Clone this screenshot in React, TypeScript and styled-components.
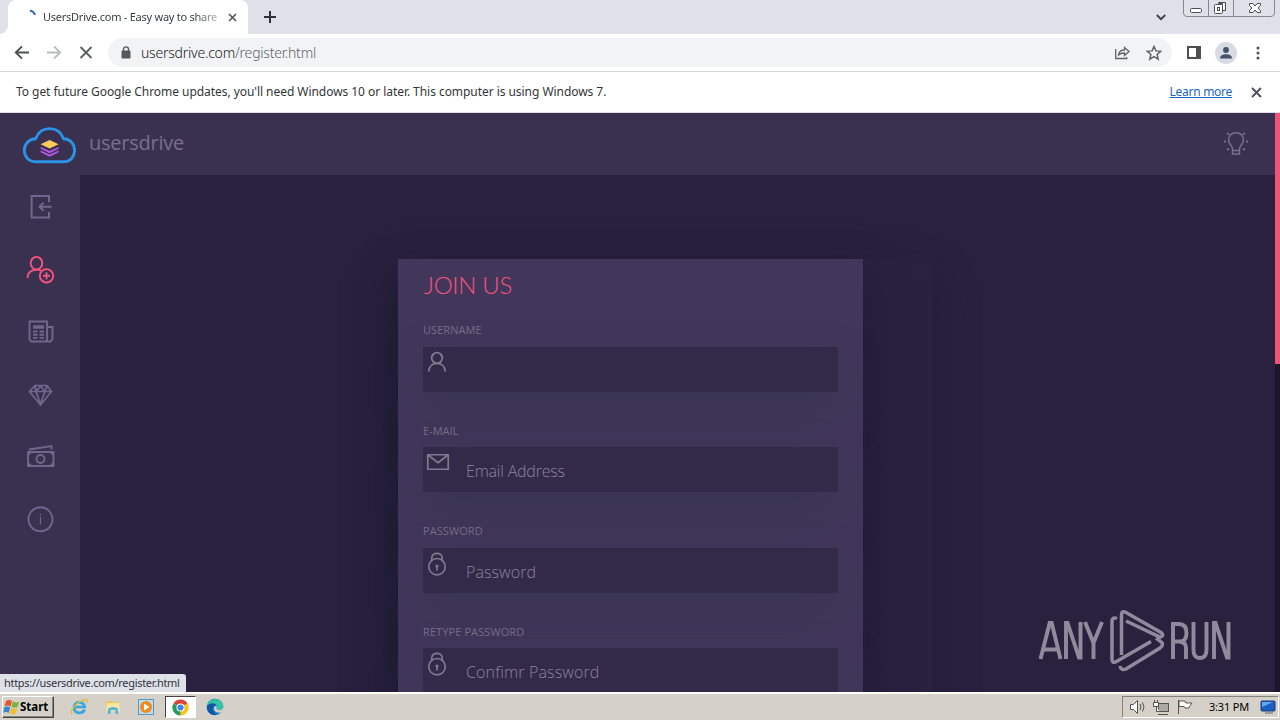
import React from 'react';
import styled, { createGlobalStyle } from 'styled-components';

const ui = `'Noto Sans', 'Open Sans', sans-serif`;
const light = `'Open Sans', 'Noto Sans', sans-serif`;

interface IField {
    label: string;
    placeholder: string;
    icon: React.ReactNode;
    labelSpacing: number;
    textSpacing: number;
}

const UserIcon = () => (
    <svg width="22" height="22" viewBox="0 0 22 22" fill="none" stroke="currentColor" strokeWidth="1.8">
        <circle cx="11" cy="7" r="5.3" />
        <path d="M2.7 20.5c.3-5 3.7-8.2 8.3-8.2s8 3.2 8.3 8.2" />
    </svg>
);

const MailIcon = () => (
    <svg width="24" height="22" viewBox="0 0 24 22" fill="none" stroke="currentColor" strokeWidth="1.7">
        <path d="M1.75 3.75h20.5v14.5H1.75zM2 4l10 7.7L22 4" />
    </svg>
);

const LockIcon = () => (
    <svg width="22" height="26" viewBox="0 1 22 26" fill="none" stroke="currentColor" strokeWidth="1.7">
        <path d="M5.8 9.5V6.8c0-6 10.4-6 10.4 0v2.7" />
        <circle cx="11" cy="15.7" r="8.2" />
        <circle cx="11" cy="15" r="1.6" fill="currentColor" stroke="none" />
        <path d="M11 15v4.5" />
    </svg>
);

const FIELDS: IField[] = [
    { label: 'USERNAME', placeholder: '', icon: <UserIcon />, labelSpacing: 0.05, textSpacing: 0 },
    { label: 'E-MAIL', placeholder: 'Email Address', icon: <MailIcon />, labelSpacing: 0, textSpacing: -0.2 },
    { label: 'PASSWORD', placeholder: 'Password', icon: <LockIcon />, labelSpacing: 0.08, textSpacing: 0.08 },
    { label: 'RETYPE PASSWORD', placeholder: 'Confimr Password', icon: <LockIcon />, labelSpacing: 0.1, textSpacing: 0.15 },
];

const CloudLogo = () => (
    <svg width="54" height="38" viewBox="-0.6 -0.6 54 38" fill="none">
        <path
            d="M14 35.2C6 35.2 1.7 30 1.7 23.700c0-6.500 4.800-11.300 11.300-11.600C15.500 5.500 21 2 27 2s11.500 3.500 14 10.100c6.500.3 11 5.100 11 11.600 0 6.300-4 11.500-12 11.500z"
            stroke="#2c92e6"
            strokeWidth="2.9"
        />
        <path d="M27 13.5l9 4.200-9 4.200-9-4.200z" fill="#ffc95c" />
        <path d="M18 20.500l9 4 9-4v1.700l-9 4.500-9-4.500zM18 24l9 4 9-4v1.700l-9 4.500-9-4.500z" fill="#b956e8" />
    </svg>
);

const BulbIcon = () => (
    <svg width="26" height="26" viewBox="0 0 26 26" fill="none" stroke="currentColor" strokeWidth="1.5">
        <path d="M9.500 20v-2.500c0-2.500-4-4-4-8.800C5.500 4.500 8.800 1.800 13 1.800s7.500 2.700 7.500 6.900c0 4.800-4 6.300-4 8.800V23h-7zM9.500 19.500h7" />
        <path d="M4 2l2 1.500M22 2l-2 1.500M1 10.500h2M23 10.500h2M4 19l2-1.500M22 19l-2-1.500" strokeWidth="1.8" />
    </svg>
);

const NAV: { name: string; active?: boolean; drawing: React.ReactNode }[] = [
    {
        name: 'login',
        drawing: <path d="M24 11V5H6.600v21.500H24V21M26.500 15.700H14.500m4-4l-4 4 4 4" strokeWidth="2" />,
    },
    {
        name: 'register',
        active: true,
        drawing: (
            <>
                <ellipse cx="11.500" cy="9.200" rx="5.800" ry="6.300" />
                <path d="M2.500 24c0-4.500 3-8 9-8.400 2 0 3 .3 4.500 1" />
                <circle cx="21.500" cy="21.800" r="6.700" />
                <path d="M21.500 18.300v7M18 21.800h7" />
            </>
        ),
    },
    {
        name: 'news',
        drawing: (
            <>
                <path d="M22 25.500H6.500l-2-2V5.500H22zM22 11h5.500v12l-2 2.500H22" />
                <path d="M8 11h11" strokeWidth="3.500" />
                <path d="M8 15.500h4.500M14.500 15.500H19M8 18.700h4.500M14.500 18.700H19M8 21.900h4.500M14.500 21.900H19" />
            </>
        ),
    },
    {
        name: 'premium',
        drawing: <path d="M10 6.500h12l4.500 6L15.500 26l-11-13.500zM4.500 12.500h22M10 6.500l1 6L15.500 25 20 12.500l2-6M11 12.500L15.500 7l4.500 5.500" strokeWidth="1.7" />,
    },
    {
        name: 'money',
        drawing: (
            <>
                <path d="M3 11h25.500v14H3zM4 8.500L26.500 5v3.500" />
                <circle cx="15.500" cy="18" r="4" />
                <path d="M3 14l3-3M3 22l3 3M28.500 14l-3-3M28.500 22l-3 3" />
            </>
        ),
    },
    {
        name: 'info',
        drawing: (
            <>
                <circle cx="15.500" cy="15.300" r="12" />
                <path d="M15.500 13v7.500M15.500 10v1.500" strokeWidth="1.200" />
            </>
        ),
    },
];

const CloseIcon = ({ size, width = 1.6 }: { size: number; width?: number }) => (
    <svg width={size} height={size} viewBox={`0 0 ${size} ${size}`} stroke="#505357" strokeWidth={width}>
        <path d={`M1 1L${size - 1} ${size - 1}M${size - 1} 1L1 ${size - 1}`} />
    </svg>
);

const TabStrip = () => (
    <StyledTabStrip>
        <StyledCorner />
        <StyledTab>
            <StyledSpinner>
                <svg width="16" height="16" viewBox="0 0 16 16" fill="none">
                    <path d="M6 2.500a7 7 0 0 1 5 4.500" stroke="#3b63c4" strokeWidth="1.8" />
                </svg>
            </StyledSpinner>
            <StyledTabTitle>UsersDrive.com - Easy way to share</StyledTabTitle>
            <CloseIcon size={9} />
        </StyledTab>
        <StyledNewTab>
            <svg width="12" height="12" viewBox="0 0 12 12" stroke="#303236" strokeWidth="2">
                <path d="M6 0v12M0 6h12" />
            </svg>
        </StyledNewTab>
        <StyledTabSearch>
            <svg width="10" height="7" viewBox="0 0 10 7" fill="none" stroke="#3c4043" strokeWidth="1.8">
                <path d="M.8 1L5 5.200 9.200 1" />
            </svg>
        </StyledTabSearch>
        <StyledCaption>
            <svg width="94" height="18" viewBox="0 0 94 18" fill="none" stroke="#85888e">
                <path d="M1.500 0v13q0 3.500 3.500 3.500h84q3.500 0 3.500-3.500V0M26.500 0v16M51.500 0v16" />
                <g stroke="#4b4e56">
                    <rect x="8.500" y="8.500" width="11" height="4" rx="1" fill="#fff" />
                    <path d="M36.500 3.500v-1h7v8h-3v-7z" fill="#fff" />
                    <rect x="32.500" y="4.500" width="8" height="9" rx="1" fill="#fff" />
                    <rect x="35.500" y="7.500" width="2" height="3" />
                    <path d="M67.500 3.500h3.500l2 2.500 2-2.500h3.500v2l-2.500 2.500 2.500 2.500v2H75l-2-2.500-2 2.500h-3.500v-2L70 8l-2.500-2.500z" fill="#fff" />
                </g>
            </svg>
        </StyledCaption>
    </StyledTabStrip>
);

const Toolbar = () => (
    <StyledToolbar>
        <svg width="94" height="16" viewBox="0 0 94 16" fill="none" strokeWidth="1.9">
            <path d="M15 7.500H2m6-6.200L1.800 7.500 8 13.700" stroke="#4d5053" />
            <path d="M33 7.500h13m-6-6.200l6.200 6.200-6.200 6.200" stroke="#babcbe" />
            <path d="M66.500 2l11 11M77.500 2l-11 11" stroke="#5d6063" />
        </svg>
        <StyledAddress>
            <svg width="10" height="13" viewBox="0 0 10 13" fill="none">
                <rect x="0.500" y="4.500" width="9" height="8" rx="1" fill="#54575b" />
                <path d="M2.500 5V3.300c0-3.300 5-3.300 5 0V5" stroke="#54575b" strokeWidth="1.4" />
            </svg>
            <StyledUrl>
                usersdrive.com<span>/register.html</span>
            </StyledUrl>
            <svg width="48" height="16" viewBox="0 0 48 16" fill="none" stroke="#5f6368" strokeWidth="1.3">
                <path d="M1.700 4v9.500h11V12M4.500 10c.5-3.500 2.500-5 6-5V2.500L15 6.500l-4.500 4V8c-3 0-4.500.5-6 2z" />
                <path d="M40 1.500l1.900 4.400 4.800.4-3.600 3.200 1.100 4.700-4.200-2.500-4.200 2.500 1.100-4.700-3.600-3.200 4.800-.4z" strokeWidth="1.5" />
            </svg>
        </StyledAddress>
        <StyledPanelIcon />
        <StyledAvatar>
            <svg width="12" height="12" viewBox="0 0 12 12" fill="#45506b">
                <circle cx="6" cy="3" r="2.9" />
                <path d="M0 11.500C0 8.500 3 7.300 6 7.300s6 1.200 6 4.200z" />
            </svg>
        </StyledAvatar>
        <svg width="4" height="14" viewBox="0 0 4 14" fill="#4d5053">
            <circle cx="2" cy="2" r="1.5" />
            <circle cx="2" cy="7" r="1.5" />
            <circle cx="2" cy="12" r="1.5" />
        </svg>
    </StyledToolbar>
);

const Watermark = () => (
    <StyledWatermark>
        <svg width="196" height="64" viewBox="0 0 196 64" fill="none" stroke="#aaa5b5" strokeWidth="3.9">
            <g opacity=".8">
                <path d="M2.500 50L11.700 14h2L22.500 50M5.500 40.500h14" />
                <path d="M28 50V14h1.500L41 48.500h1.500V13" />
                <path d="M47 13l8.500 21V50M64 13l-8.500 21" />
                <path d="M79 9.500q-5-2-5 3V50q0 5 4.500 2.500L113 32.500" strokeWidth="3.5" />
                <path d="M83.500 46V6q0-5 4.500-2.500L123 23.500q4 3-1 4.700L88 12" strokeWidth="3.5" />
                <path d="M82 57q1 5 6 3l34-21q5-4 0-7l-4-3" strokeWidth="3.5" />
                <path d="M135 50V15h6q7.500 0 7.500 9t-7.500 8.500h-6M142 33q6 0 6 6v11" />
                <path d="M155.500 13v28q0 8 6.500 8t6.500-8V13" />
                <path d="M176 50V14h1.500L189 48.500h1.500V13" />
            </g>
        </svg>
    </StyledWatermark>
);

const Taskbar = () => (
    <StyledTaskbar>
        <StyledStart>
            <svg width="17" height="16" viewBox="0 0 17 16">
                <path d="M3 2q3-2 6 0L7.500 7.500q-3-2-6 0z" fill="#e4572e" />
                <path d="M9.800 2.300q3 2 6.200.4L14.500 8q-3 1.500-6-.2z" fill="#79b53b" />
                <path d="M1.200 8.600q3-2 6 0L5.700 14q-3-2-5.500 0z" fill="#3a82d2" />
                <path d="M8.200 9q3 2 6 .2l-1.500 5.300q-3 1.500-6-.2z" fill="#f5bd2b" />
            </svg>
            Start
        </StyledStart>
        <StyledApp>
            <svg width="18" height="18" viewBox="0 0 18 18" fill="none">
                <path d="M14.500 11.500c-1.500 5-10.500 4.500-10.500-2s9.500-7 10.700-.5H5" stroke="#36a7e3" strokeWidth="2.7" />
                <path d="M2 16C-1 12 9 2 16.500 1.500c1.500.5 0 3-.5 3.500" stroke="#e6bb3c" strokeWidth="1.3" />
            </svg>
        </StyledApp>
        <StyledApp>
            <svg width="18" height="18" viewBox="0 0 18 18">
                <path d="M2 3.500l5-1 1 1.500h7v9H2z" fill="#e9c65e" />
                <path d="M3 5h12l1 8H2z" fill="#f8e6a0" />
                <path d="M4 16v-5.500q5-3 10 0V16h-2.500v-4h-5v4z" fill="#55b2d9" />
            </svg>
        </StyledApp>
        <StyledApp>
            <svg width="18" height="18" viewBox="0 0 18 18">
                <rect x="1.500" y="1.500" width="15" height="15" fill="#bcdcf0" stroke="#5598c6" />
                <circle cx="9" cy="9" r="6" fill="#f28a1a" />
                <path d="M7 5.500L12.500 9 7 12.500z" fill="#fff" />
            </svg>
        </StyledApp>
        <StyledApp $active>
            <svg width="17" height="17" viewBox="0 0 18 18">
                <path d="M9 9L1.600 4.750A8.500 8.500 0 0 1 16.400 4.750z" fill="#dc4437" />
                <path d="M9 9L16.400 4.750A8.500 8.500 0 0 1 9 17.500z" fill="#fbc116" />
                <path d="M9 9v8.500A8.500 8.500 0 0 1 1.600 4.750z" fill="#279c54" />
                <circle cx="9" cy="9" r="4.3" fill="#fff" />
                <circle cx="9" cy="9" r="3.3" fill="#4285e8" />
            </svg>
        </StyledApp>
        <StyledApp>
            <svg width="18" height="18" viewBox="0 0 18 18">
                <circle cx="9" cy="9" r="8.3" fill="#1677c5" />
                <path d="M1 8C2-1 17-1 17.300 8.500c0 4-5.300 4-6.800 2.500 1.500-3-3-6-9.500-3z" fill="#35c1a8" />
                <path d="M17.300 8.500c0 4-5.300 4-6.800 2.500.5-1.500 0-2.500-1-3.200-4 3 0 8.200 5.500 6.700l2-2z" fill="#d3d0c8" />
                <path d="M1 8c3.500-4 9-3 9.500 0-4-2-6 5 0 8.700C4 18 0 13 1 8z" fill="#1257a4" />
            </svg>
        </StyledApp>
        <StyledTray>
            <svg width="68" height="18" viewBox="0 0 68 18" fill="#fff" stroke="#55544f">
                <path d="M1.500 6.500h3l4-4v13l-4-4h-3z" />
                <path d="M11 6q2 3 0 6M13.500 4.500q3 4.500 0 9" fill="none" />
                <rect x="29.500" y="5.500" width="10" height="8" fill="#aaa9a4" />
                <path d="M29 16.500h10M25.500 2v3M28.500 2v3M24.500 4.500h5v4h-5zM27.500 8.500v5h3" />
                <path d="M49.500 2v14M50 3h6l1 2h6l-2.500 3.500L60 10h-4l-1-1.500h-5z" />
            </svg>
            <StyledClock>3:31 PM</StyledClock>
            <svg width="17" height="14" viewBox="0 0 17 14">
                <rect x="1" y="1" width="14" height="10" rx="1" fill="#1d5dc0" stroke="#173d7c" />
                <path d="M2 2h11L2 7z" fill="#64a8ee" />
                <path d="M5 13h8" stroke="#5c6775" />
            </svg>
        </StyledTray>
    </StyledTaskbar>
);

const App = () => {
    return (
        <StyledScreen>
            <GlobalStyle />
            <TabStrip />
            <Toolbar />
            <StyledInfoBar>
                <p>To get future Google Chrome updates, you'll need Windows 10 or later. This computer is using Windows 7.</p>
                <a>Learn more</a>
                <CloseIcon size={11} width={1.9} />
            </StyledInfoBar>
            <StyledPage>
                <StyledSite>
                    <StyledHeader>
                        <CloudLogo />
                        <StyledBrand>usersdrive</StyledBrand>
                        <BulbIcon />
                    </StyledHeader>
                    <StyledBody>
                        <StyledSidebar>
                            {NAV.map((item) => (
                                <StyledNavItem key={item.name} $active={item.active}>
                                    <svg width="32" height="32" viewBox="0 0 32 32" fill="none" stroke="currentColor" strokeWidth="1.9">
                                        {item.drawing}
                                    </svg>
                                </StyledNavItem>
                            ))}
                        </StyledSidebar>
                        <StyledMain>
                            <StyledPanel>
                                <StyledCard>
                                    <h1>JOIN US</h1>
                                    {FIELDS.map((field) => (
                                        <StyledField key={field.label}>
                                            <StyledLabel $spacing={field.labelSpacing}>{field.label}</StyledLabel>
                                            <StyledInput $spacing={field.textSpacing}>
                                                <StyledFieldIcon>{field.icon}</StyledFieldIcon>
                                                <span>{field.placeholder}</span>
                                            </StyledInput>
                                        </StyledField>
                                    ))}
                                </StyledCard>
                            </StyledPanel>
                        </StyledMain>
                    </StyledBody>
                </StyledSite>
                <StyledScrollbar />
                <Watermark />
                <StyledStatus>https://usersdrive.com/register.html</StyledStatus>
            </StyledPage>
            <Taskbar />
        </StyledScreen>
    );
};

const GlobalStyle = createGlobalStyle`
    * {
        box-sizing: border-box;
    }
    body {
        margin: 0;
        overflow: hidden;
    }
    svg {
        display: block;
        flex-shrink: 0;
    }
`;

const StyledScreen = styled.div`
    display: flex;
    flex-direction: column;
    width: 1280px;
    height: 720px;
    overflow: hidden;
    background: #fff;
    font-family: ${ui};
    white-space: nowrap;
`;

const StyledTabStrip = styled.div`
    display: flex;
    height: 34px;
    flex-shrink: 0;
    background: #dee1e8;
`;
const StyledCorner = styled.div`
    width: 8px;
    background: radial-gradient(circle at 0 26px, #dee1e8 7.5px, #fff 8px);
    clip-path: inset(26px 0 0 0);
`;
const StyledTab = styled.div`
    display: flex;
    align-items: center;
    width: 240px;
    padding-left: 16px;
    border-radius: 8px 8px 0 0;
    background: #fff;
`;
const StyledSpinner = styled.div`
    width: 19px;
    padding-top: 2px;
    margin-bottom: 4px;
`;
const StyledTabTitle = styled.div`
    width: 176px;
    margin-right: 9px;
    padding-bottom: 1px;
    color: #3c4043;
    font-size: 11px;
    letter-spacing: -0.25px;
    mask-image: linear-gradient(90deg, #000 86%, rgba(0, 0, 0, 0.3));
`;
const StyledNewTab = styled.div`
    display: flex;
    align-items: center;
    padding-left: 16px;
`;
const StyledTabSearch = styled.div`
    display: flex;
    align-items: center;
    margin-left: auto;
    margin-right: 16px;
`;
const StyledCaption = styled.div`
    margin-right: 4px;
`;

const StyledToolbar = styled.div`
    display: flex;
    align-items: center;
    height: 38px;
    flex-shrink: 0;
    padding-left: 14px;
    border-bottom: 1px solid #d5d7da;
`;
const StyledAddress = styled.div`
    display: flex;
    align-items: center;
    width: 1064px;
    height: 29px;
    margin-right: 15px;
    padding: 0 10px 0 13px;
    border-radius: 15px;
    background: #f1f3f4;
`;
const StyledUrl = styled.div`
    flex: 1;
    margin-left: 10px;
    color: #202124;
    font-size: 14px;
    font-weight: 300;
    letter-spacing: -0.22px;
    span {
        color: #5f6368;
    }
`;
const StyledPanelIcon = styled.div`
    width: 14px;
    height: 13px;
    border: 2px solid #4d5053;
    border-right-width: 5px;
`;
const StyledAvatar = styled.div`
    display: flex;
    align-items: center;
    justify-content: center;
    width: 22px;
    height: 22px;
    margin: 0 19px 0 14px;
    border-radius: 50%;
    background: #d7dbe4;
`;

const StyledInfoBar = styled.div`
    display: flex;
    align-items: center;
    height: 41px;
    flex-shrink: 0;
    padding: 0 18px 0 16px;
    border-bottom: 1px solid #dcdce4;
    font-size: 12px;
    p {
        flex: 1;
        margin: 0;
        padding-bottom: 2px;
        color: #333639;
        letter-spacing: -0.05px;
    }
    a {
        margin-right: 19px;
        padding-bottom: 2px;
        color: #1967c2;
        letter-spacing: -0.28px;
        text-decoration: underline;
    }
`;

const StyledPage = styled.div`
    position: relative;
    display: flex;
    height: 579px;
    flex-shrink: 0;
    overflow: hidden;
    background: #1b1727;
`;
const StyledSite = styled.div`
    width: 1275px;
`;
const StyledHeader = styled.div`
    display: flex;
    align-items: center;
    height: 62px;
    padding: 2px 26px 0 22px;
    color: #787089;
    background: #3a3151;
    svg:last-child {
        margin-bottom: 2px;
    }
`;
const StyledBrand = styled.div`
    flex: 1;
    margin-left: 13px;
    padding-bottom: 5px;
    font-family: ${light};
    font-size: 20px;
    letter-spacing: -0.25px;
`;
const StyledBody = styled.div`
    display: flex;
    height: 517px;
`;
const StyledSidebar = styled.div`
    display: flex;
    flex-direction: column;
    width: 80px;
    padding: 1px 0 0 1px;
    background: #3a3151;
`;
const StyledNavItem = styled.div<{ $active?: boolean }>`
    display: flex;
    align-items: center;
    justify-content: center;
    height: 62.5px;
    color: ${(props) => (props.$active ? '#f6537f' : '#6f688a')};
`;
const StyledMain = styled.div`
    flex: 1;
    overflow: hidden;
    background: #2a213f;
`;
/* wider than the form: the free strip on the right belongs to it */
const StyledPanel = styled.div`
    width: 535px;
    height: 620px;
    margin: 84px 0 0 318px;
    background: #2a213f;
    box-shadow: 0 20px 40px rgba(22, 26, 44, 0.45);
`;
const StyledCard = styled.div`
    width: 465px;
    height: 620px;
    padding: 10px 25px;
    background: #42375a;
    box-shadow: 0 20px 40px rgba(22, 26, 44, 0.6);
    h1 {
        height: 32px;
        margin: 0 0 20px;
        padding-left: 1px;
        color: #f6537f;
        font-family: Lato, sans-serif;
        font-size: 24px;
        font-weight: 300;
        letter-spacing: -0.3px;
        line-height: 32px;
    }
`;
const StyledField = styled.div`
    height: 100.4px;
    &:nth-of-type(even) {
        --label-shift: 1px;
    }
`;
const StyledLabel = styled.div<{ $spacing: number }>`
    height: 26px;
    padding-top: var(--label-shift, 0);
    color: #756c87;
    font-family: ${light};
    font-size: 11px;
    letter-spacing: ${(props) => props.$spacing}px;
    line-height: 18px;
`;
const StyledInput = styled.div<{ $spacing: number }>`
    display: flex;
    height: 45px;
    padding-left: 3px;
    background: #332a49;
    box-shadow: 0 20px 40px rgba(48, 52, 78, 0.5);
    color: #8c849c;
    font-family: ${light};
    font-size: 16px;
    font-weight: 300;
    letter-spacing: ${(props) => props.$spacing}px;
    line-height: 48.6px;
`;
const StyledFieldIcon = styled.div`
    width: 40px;
    padding-top: 4px;
    color: #81798f;
`;
const StyledScrollbar = styled.div`
    width: 5px;
    height: 251px;
    background: #ef5378;
`;
const StyledWatermark = styled.div`
    position: absolute;
    right: 46px;
    bottom: 19px;
`;
const StyledStatus = styled.div`
    position: absolute;
    left: 0;
    bottom: 0;
    width: 186px;
    height: 18px;
    padding-left: 4px;
    border-radius: 0 3px 0 0;
    background: #dee1e8;
    color: #33363b;
    font-size: 11px;
    letter-spacing: -0.3px;
    line-height: 18px;
`;

const StyledTaskbar = styled.div`
    display: flex;
    align-items: center;
    height: 28px;
    padding: 0 1px 0 2px;
    border-top: 2px solid #fff;
    background: #d5d1c8;
`;
const StyledStart = styled.div`
    display: flex;
    align-items: center;
    width: 52px;
    height: 22px;
    margin-right: 10px;
    border: 1px solid;
    border-color: #fff #45433f #45433f #fff;
    box-shadow: inset -1px -1px #8a877f;
    color: #000;
    font-size: 11.5px;
    font-weight: 700;
    line-height: 18px;
`;
const StyledApp = styled.div<{ $active?: boolean }>`
    display: flex;
    align-items: center;
    justify-content: center;
    width: ${(props) => (props.$active ? '31px' : '30px')};
    height: 22px;
    margin-right: 3.7px;
    border: 1px solid;
    border-color: ${(props) => (props.$active ? '#45433f #fff #fff #45433f' : 'transparent')};
    background: ${(props) => (props.$active ? '#fff' : 'transparent')};
`;
const StyledTray = styled.div`
    display: flex;
    align-items: center;
    width: 157px;
    height: 22px;
    margin-left: auto;
    padding-left: 6px;
    border: 1px solid;
    border-color: #85827a #fff #fff #85827a;
`;
const StyledClock = styled.div`
    width: 51px;
    margin-left: 12px;
    padding-bottom: 1px;
    color: #000;
    font-size: 11px;
    letter-spacing: -0.2px;
`;

export default App;
